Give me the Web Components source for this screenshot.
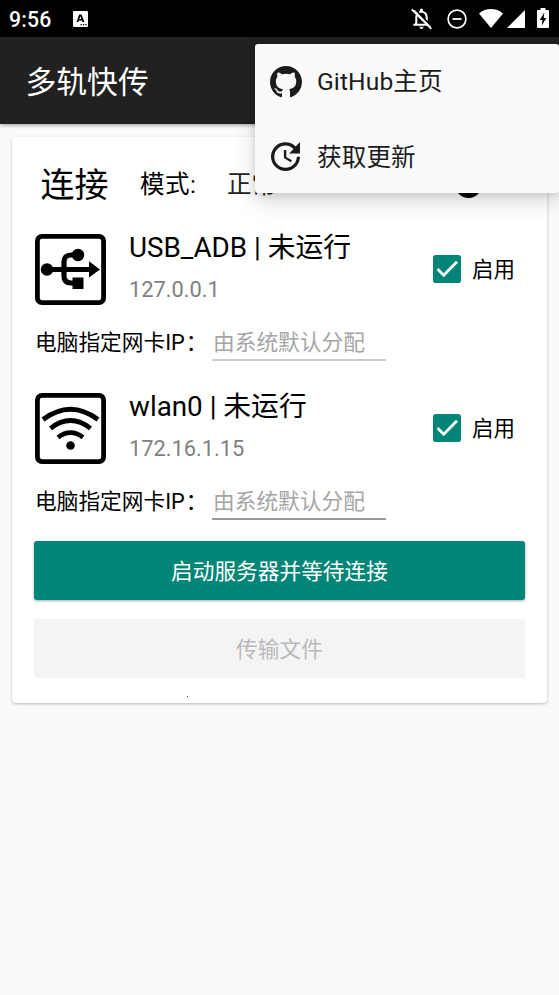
<!DOCTYPE html>
<html lang="zh-CN">
<head>
<meta charset="utf-8">
<title>多轨快传</title>
<style>
html,body{margin:0;height:100%;overflow:hidden;background:#fafafa}
body{font-family:Roboto,"Noto Sans CJK SC",sans-serif;color:#000}
</style>
</head>
<body>
<app-screen></app-screen>
<script>
const icons = {
  bell:['0 0 24 24','<path fill="#fff" d="M20 18.69 7.84 6.14 5.27 3.49 4 4.76l2.8 2.8v.01c-.52.99-.8 2.16-.8 3.42v5l-2 2v1h13.73l2 2L21 19.72l-1-1.03zM8 17v-6c0-.71.13-1.38.37-1.96L16 17H8zm4 5c1.11 0 2-.89 2-2h-4c0 1.11.89 2 2 2zm4-9.5 2 2V11c0-3.07-1.63-5.64-4.5-6.32V4a1.5 1.5 0 0 0-3 0v.68c-.5.12-.97.3-1.4.53l1.5 1.5c.43-.14.9-.21 1.4-.21 2.5 0 4 2 4 4.5z"/><path stroke="#fff" stroke-width="1.7" d="M2.6 3.2 21.4 22"/>'],
  dnd:['0 0 20 20','<circle cx="10" cy="10" r="8.9" fill="none" stroke="#fff" stroke-width="1.7"/><path stroke="#fff" stroke-width="1.8" d="M5.5 10h9"/>'],
  signal:['0 0 24 19','<path fill="#fff" d="M0 4.4C7-1.4 17-1.4 24 4.4L12 19Z"/>'],
  cell:['0 0 18 18','<path fill="#fff" d="M0 18 18 0V18Z"/>'],
  battery:['0 0 12 20','<path fill="#fff" d="M3.5 0h5v2H11q1 0 1 1v16q0 1-1 1H1q-1 0-1-1V3q0-1 1-1h2.5Z"/><path fill="#000" d="M7.3 4.5 2.8 12h2.6L4.8 17.5 9.3 10H6.7Z"/>'],
  badge:['0 0 15 16','<rect width="15" height="16" rx="1.3" fill="#fff"/><path fill="#000" fill-rule="evenodd" d="M6.1 3.5h2.5L11.4 11H9.3L8.8 9.5H5.9L5.4 11H3.5ZM6.4 8h2L7.4 5.2Z"/><path d="M7.5 13h1.3v1.3H7.5zm2.4 0h1.3v1.3H9.9zm2.4 0h1.3v1.3h-1.3z"/>'],
  github:['0 0 16 16','<path fill="#1b1b1b" d="M8 0C3.58 0 0 3.58 0 8c0 3.54 2.29 6.53 5.47 7.59.4.07.55-.17.55-.38 0-.19-.01-.82-.01-1.49-2.01.37-2.53-.49-2.69-.94-.09-.23-.48-.94-.82-1.13-.28-.15-.68-.52-.01-.53.63-.01 1.08.58 1.23.82.72 1.21 1.87.87 2.33.66.07-.52.28-.87.51-1.07-1.78-.2-3.64-.89-3.64-3.95 0-.87.31-1.59.82-2.15-.08-.2-.36-1.02.08-2.12 0 0 .67-.21 2.2.82.64-.18 1.32-.27 2-.27s1.36.09 2 .27c1.53-1.04 2.2-.82 2.2-.82.44 1.1.16 1.92.08 2.12.51.56.82 1.27.82 2.15 0 3.07-1.87 3.75-3.65 3.95.29.25.54.73.54 1.48 0 1.07-.01 1.93-.01 2.2 0 .21.15.46.55.38A8.01 8.01 0 0 0 16 8c0-4.42-3.58-8-8-8z"/>'],
  update:['3 3 18 18','<path fill="#1b1b1b" d="M21 10.12h-6.78l2.74-2.82c-2.73-2.7-7.15-2.8-9.88-.1a6.887 6.887 0 0 0 0 9.8c2.73 2.7 7.15 2.7 9.88 0 1.36-1.35 2.04-2.92 2.04-4.9h2c0 1.98-.88 4.55-2.64 6.29-3.51 3.48-9.21 3.48-12.72 0-3.5-3.47-3.53-9.11-.02-12.58a8.987 8.987 0 0 1 12.65 0L21 3v7.12zM12.5 8v4.25l3.5 2.08-.72 1.21L11 13V8h1.5z"/>'],
  usb:['0 0 71 71','<rect x="2.4" y="2.4" width="66.2" height="66.2" rx="4.5" fill="none" stroke="#000" stroke-width="4.8"/><path fill="none" stroke="#000" stroke-width="5.2" d="M11 35.5h47M43 21h-7q-7 0-7 7v14q0 7 7 7h7"/><circle cx="12" cy="35.5" r="6.2"/><circle cx="43" cy="21" r="6.2"/><path d="M37.5 43.5h11v11.5h-11zM54 27.3 65 35.5 54 43.5z"/>'],
  wifi:['0 0 71 71','<rect x="2.4" y="2.4" width="66.2" height="66.2" rx="4.5" fill="none" stroke="#000" stroke-width="4.8"/><path fill="none" stroke="#000" stroke-width="4.7" d="M8 26.5q27.5-20.5 55 0M15.5 35.3q20-15.6 40 0M23 44.3q12.5-9.4 25 0"/><circle cx="35.5" cy="52.5" r="4.3"/>'],
  check:['0 0 28 28','<rect width="28" height="28" rx="2.8" fill="#018577"/><path fill="none" stroke="#fff" stroke-width="2.8" d="m4.5 14 6.2 6.2L24 6.8"/>'],
  dot:['0 0 27 27','<circle cx="13.5" cy="13.5" r="13.5"/>']
};
function define(name, css, html){
  customElements.define(name, class extends HTMLElement{
    connectedCallback(){
      if(this.shadowRoot) return;
      const content = typeof html === 'function' ? html(this) : html;
      this.attachShadow({mode:'open'}).innerHTML = `<style>*{box-sizing:border-box}${css}</style>${content}`;
    }
  });
}
define('ui-icon', ':host{display:block;flex:none}svg{display:block;width:100%;height:100%}',
  el => { const [vb, body] = icons[el.getAttribute('name')]; return `<svg viewBox="${vb}" preserveAspectRatio="none">${body}</svg>`; });

define('status-bar', `:host{display:flex;height:37px;background:#000;color:#fff;padding:0 10px 0 9px;align-items:center;box-sizing:border-box}
 .time{font-size:21.2px;line-height:37px;font-weight:500;width:64px;padding-top:2px;letter-spacing:.2px}
 .right{margin-left:auto;display:flex;align-items:center}`,
 `<span class="time">9:56</span><ui-icon name="badge" style="width:15px;height:16px"></ui-icon>
 <div class="right"><ui-icon name="bell" style="width:25px;height:25px;margin-right:13px"></ui-icon>
 <ui-icon name="dnd" style="width:20px;height:20px;margin-right:12px"></ui-icon>
 <ui-icon name="signal" style="width:24px;height:19px;margin-right:4px"></ui-icon>
 <ui-icon name="cell" style="width:18px;height:18px;margin-right:12px"></ui-icon>
 <ui-icon name="battery" style="width:12px;height:20px;margin-top:-1px"></ui-icon></div>`);

define('app-bar', `:host{display:block;height:87px;background:#212121;color:#fff;padding:1px 0 0 25.5px;box-sizing:border-box;font-size:30.8px;line-height:89px;box-shadow:0 1px 4px #0006}`, '<slot></slot>');

define('check-option', `:host{display:flex;align-items:center;font-size:21.5px;line-height:30px}ui-icon{width:28px;height:28px;margin-right:11px}.text{padding-top:2px}`,
 '<ui-icon name="check"></ui-icon><span class="text"><slot></slot></span>');

define('ip-field', `:host{display:flex;height:36px;font-size:21.7px;line-height:36px;white-space:nowrap}
 .label{width:178px;padding-left:1px}.colon{margin-left:1px}.input{width:174px;height:36px;color:#a5a5a5;border-bottom:2px solid var(--line,#ccc);padding-left:1px}`,
 el => `<span class="label">电脑指定网卡IP<span class="colon">：</span></span><span class="input">${el.getAttribute('placeholder')}</span>`);

define('device-row', `:host{display:block;height:159px}
 .top{display:flex;height:91px}.pic{width:71px;height:71px;margin:-.5px 23px 0 1px}
 .info{display:flex;flex-direction:column;flex:1;white-space:nowrap}
 .name{font-size:27.8px;line-height:34px;margin-top:-3px}.addr{font-size:21.8px;line-height:30px;color:#808080;margin-top:9.5px}
 check-option{height:69px;margin-right:10px}`,
 el => `<div class="top"><ui-icon class="pic" name="${el.getAttribute('icon')}"></ui-icon>
 <div class="info"><span class="name">${el.getAttribute('name')}</span><span class="addr">${el.getAttribute('addr')}</span></div>
 <check-option>启用</check-option></div><ip-field placeholder="由系统默认分配"></ip-field>`);

define('action-button', `:host{display:flex;align-items:center;justify-content:center;height:59px;padding-bottom:2px;box-sizing:border-box;border-radius:3px;font-size:21.7px;background:#018577;color:#fff;box-shadow:0 1px 3px #0005}
 :host([disabled]){background:#f4f4f4;color:#b9b9b9;box-shadow:none}`, '<slot></slot>');

define('connection-card', `:host{display:block;margin:13px 12px 0;height:566px;padding:0 22px;box-sizing:border-box;background:#fff;border-radius:4px;box-shadow:0 1px 3px #0004}
 .head{display:flex;align-items:center;height:97px;padding-bottom:2px;white-space:nowrap;font-size:24.5px;line-height:40px;padding-left:6.5px}
 .h{font-size:34px;width:99.5px}.mode{width:87px;letter-spacing:.5px}.val{flex:1;color:#222}.more{display:flex;gap:11px;align-items:center;font-size:21.5px;margin:-4px -11px 0 0}
 .more ui-icon{width:27px;height:27px;margin-top:3px}action-button{margin-bottom:19px}.last{margin:0}
 .mark{width:1px;height:1px;background:#555;margin:18px 0 0 153px}
 device-row+device-row{height:148px}`,
 `<div class="head"><span class="h">连接</span><span class="mode">模式:</span><span class="val">正常</span><span class="more"><ui-icon name="dot"></ui-icon>帮助</span></div>
 <device-row icon="usb" name="USB_ADB | 未运行" addr="127.0.0.1"></device-row>
 <device-row icon="wifi" name="wlan0 | 未运行" addr="172.16.1.15" style="--line:#999"></device-row>
 <action-button>启动服务器并等待连接</action-button><action-button class="last" disabled>传输文件</action-button><div class="mark"></div>`);

define('menu-item', `:host{display:flex;height:74.5px;align-items:center;font-size:24.6px;line-height:40px;padding:2px 0 0 15px;box-sizing:border-box;color:#1b1b1b;white-space:nowrap}
 .text{padding-top:1px;letter-spacing:.1px}:host([icon=update]) .text{padding-top:3px}
 ui-icon{width:32px;height:32px;margin-right:15px}ui-icon[name=update]{width:29px;height:29px;margin:0 17px 0 1px}`,
 el => `<ui-icon name="${el.getAttribute('icon')}"></ui-icon><span class="text"><slot></slot></span>`);

define('popup-menu', `:host{position:absolute;left:255px;top:43.5px;width:304px;height:149.5px;background:#fafafa;border-radius:3px;box-shadow:0 10px 22px #0002,0 2px 8px #0002;z-index:2}`, '<slot></slot>');

define('app-screen', `:host{display:block;position:relative;width:559px;height:995px;overflow:hidden;background:#fafafa}`,
 `<status-bar></status-bar><app-bar>多轨快传</app-bar><connection-card></connection-card>
 <popup-menu><menu-item icon="github">GitHub主页</menu-item><menu-item icon="update">获取更新</menu-item></popup-menu>`);
</script>
</body>
</html>
